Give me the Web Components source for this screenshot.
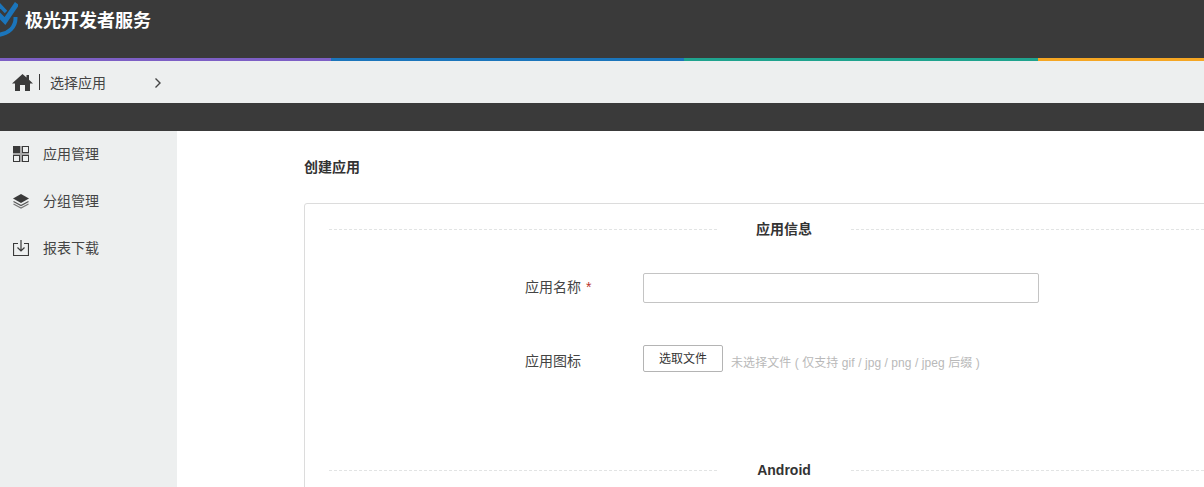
<!DOCTYPE html>
<html lang="zh">
<head>
<meta charset="utf-8">
<title>极光开发者服务</title>
<style>
  html, body { margin: 0; height: 100%; overflow: hidden; background: #fff; }
  body { font-family: "Liberation Sans", "Noto Sans CJK SC", sans-serif; font-size: 14px; color: #333; }
</style>
</head>
<body>
<app-header></app-header>
<app-breadcrumb>选择应用</app-breadcrumb>
<div style="height:28px;background:#3a3a3a"></div>
<div style="display:flex;height:356px">
  <app-sidebar>
    <side-item icon="grid">应用管理</side-item>
    <side-item icon="layers">分组管理</side-item>
    <side-item icon="download">报表下载</side-item>
  </app-sidebar>
  <app-main></app-main>
</div>

<script>
class AppHeader extends HTMLElement {
  constructor() {
    super();
    this.attachShadow({ mode: "open" });
    this.shadowRoot.innerHTML = `
      <style>
        :host { display: block; }
        .bar { height: 58px; background: #3a3a3a; display: flex; align-items: flex-start; }
        svg { flex: none; }
        h1 { margin: 9px 0 0 7px; font-size: 18px; line-height: 24px; font-weight: 700; color: #fff; }
        .strip { display: flex; height: 3px; }
        .strip i { display: block; }
      </style>
      <div class="bar">
        <svg width="18" height="38" viewBox="0 0 18 38" fill="none" stroke="#1b75bb">
          <path d="M-3 2.5 L6 12" stroke-width="3.5"/>
          <path d="M-3 13 L5 21 L17 3.5" stroke-width="5"/>
          <path d="M15.5 17 C16 27 9 34 -3 35" stroke-width="4"/>
        </svg>
        <h1>极光开发者服务</h1>
      </div>
      <div class="strip">
        <i style="width:331px;background:#7d5fc5"></i>
        <i style="width:353px;background:#1b75bb"></i>
        <i style="width:354px;background:#1fa38e"></i>
        <i style="flex:1;background:#f5a623"></i>
      </div>`;
  }
}

class AppBreadcrumb extends HTMLElement {
  constructor() {
    super();
    this.attachShadow({ mode: "open" });
    this.shadowRoot.innerHTML = `
      <style>
        :host { display: flex; align-items: center; height: 42px; background: #edefef; color: #444; }
        svg { flex: none; }
        .home { margin-left: 12px; }
        .sep { width: 1px; height: 16px; background: #3a3a3a; margin: 0 10px 0 6px; }
        .label { width: 104px; font-size: 14px; }
        .next { margin-top: 2px; }
      </style>
      <svg class="home" width="21" height="18" viewBox="0 0 21 18" fill="#3a3a3a">
        <path d="M10.5 1 L0 10.5 L3 10.5 L3 18 L8 18 L8 12 L13 12 L13 18 L18 18 L18 10.5 L21 10.5 L17 6.8 L17 2 L14.5 2 L14.5 4.5 Z"/>
      </svg>
      <span class="sep"></span>
      <span class="label"><slot></slot></span>
      <svg class="next" width="8" height="12" viewBox="0 0 8 12" fill="none" stroke="#444" stroke-width="1.4"><path d="M1.5 1.5 L6 6 L1.5 10.5"/></svg>`;
  }
}

class AppSidebar extends HTMLElement {
  constructor() {
    super();
    this.attachShadow({ mode: "open" });
    this.shadowRoot.innerHTML = `
      <style>
        :host { display: flex; flex-direction: column; flex: none; width: 177px; background: #edefef; }
      </style>
      <slot></slot>`;
  }
}

const sideIcons = {
  grid: `<rect x="6" y="6" width="4" height="4" fill="#9a9a9a"/>
         <rect x="0" y="7" width="16" height="2" fill="#a8a8a8"/>
         <rect x="7" y="0" width="2" height="16" fill="#a8a8a8"/>
         <rect x="0" y="0" width="7" height="7" fill="#3a3a3a"/>
         <rect x="9.5" y="0.5" width="6" height="6" fill="none" stroke="#3a3a3a"/>
         <rect x="0.5" y="9.5" width="6" height="6" fill="none" stroke="#3a3a3a"/>
         <rect x="9.5" y="9.5" width="6" height="6" fill="none" stroke="#3a3a3a"/>`,
  layers: `<path d="M8 1 L16 5.5 L8 10 L0 5.5 Z" fill="#3a3a3a"/>
           <path d="M0.5 8.5 L8 12.5 L15.5 8.5" fill="none" stroke="#555" stroke-width="1.2"/>
           <path d="M0.5 11 L8 15 L15.5 11" fill="none" stroke="#777" stroke-width="1.2"/>`,
  download: `<path d="M5 3.5 H0.5 V15.5 H15.5 V3.5 H11" fill="none" stroke="#3a3a3a" stroke-width="1.2"/>
             <path d="M8 0 V11 M4.5 7.5 L8 11 L11.5 7.5" fill="none" stroke="#3a3a3a" stroke-width="1.2"/>`
};

class SideItem extends HTMLElement {
  constructor() {
    super();
    this.attachShadow({ mode: "open" });
    this.shadowRoot.innerHTML = `
      <style>
        :host { display: flex; align-items: center; height: 47px; padding-left: 13px; gap: 14px; color: #444; font-size: 14px; }
        svg { flex: none; margin-bottom: 1px; }
        span { margin-bottom: 4px; }
      </style>
      <svg width="16" height="16" viewBox="0 0 16 16">${sideIcons[this.getAttribute("icon")]}</svg>
      <span><slot></slot></span>`;
  }
}

class FormSection extends HTMLElement {
  constructor() {
    super();
    this.attachShadow({ mode: "open" });
    this.shadowRoot.innerHTML = `
      <style>
        :host { display: flex; align-items: center; height: 20px; padding: 0 24px; }
        .line { flex: 1; border-top: 1px dashed #e2e4e4; }
        .title { width: 134px; text-align: center; font-size: 14px; line-height: 20px; font-weight: 700; color: #333; }
      </style>
      <span class="line"></span>
      <span class="title"><slot></slot></span>
      <span class="line"></span>`;
  }
}

class FormRow extends HTMLElement {
  constructor() {
    super();
    this.attachShadow({ mode: "open" });
    this.shadowRoot.innerHTML = `
      <style>
        :host { display: flex; align-items: flex-start; }
        .label { width: 338px; box-sizing: border-box; padding: var(--label-top, 4px) 0 0 220px; line-height: 20px; font-size: 14px; color: #444; flex: none; }
      </style>
      <div class="label"><slot name="label"></slot></div>
      <slot></slot>`;
  }
}

class AppMain extends HTMLElement {
  constructor() {
    super();
    this.attachShadow({ mode: "open" });
    this.shadowRoot.innerHTML = `
      <style>
        :host { display: block; flex: 1; min-width: 0; overflow: hidden; padding-left: 127px; background: #fff; }
        h2 { margin: 0; padding-top: 27px; height: 45px; line-height: 19px; font-size: 14px; font-weight: 700; color: #333; }
        .card { width: 960px; box-sizing: border-box; height: 320px; border: 1px solid #dcdcdc; border-radius: 3px; padding-top: 15px; }
        .name { margin-top: 34px; --label-top: 4px; }
        .icon { margin-top: 42px; --label-top: 6px; }
        .last { margin-top: 88px; }
        .star { color: #b8342c; margin-left: 1px; }
        input { display: block; width: 396px; height: 30px; box-sizing: border-box; border: 1px solid #c4c4c4; border-radius: 2px; margin: 0; padding: 0; background: #fff; }
        .file { display: flex; align-items: flex-start; }
        button { width: 80px; height: 27px; padding: 0 0 2px; box-sizing: border-box; border: 1px solid #b4b4b4; border-radius: 2px; background: #fff; font: inherit; font-size: 12px; color: #333; }
        .hint { margin: 9px 0 0 8px; font-size: 12px; line-height: 18px; color: #b9b9b9; letter-spacing: 0.07px; }
      </style>
      <h2>创建应用</h2>
      <div class="card">
        <form-section>应用信息</form-section>
        <form-row class="name">
          <span slot="label">应用名称 <span class="star">*</span></span>
          <input type="text">
        </form-row>
        <form-row class="icon">
          <span slot="label">应用图标</span>
          <div class="file">
            <button type="button">选取文件</button>
            <span class="hint">未选择文件 ( 仅支持 gif / jpg / png / jpeg 后缀 )</span>
          </div>
        </form-row>
        <form-section class="last">Android</form-section>
      </div>`;
  }
}

customElements.define("app-header", AppHeader);
customElements.define("app-breadcrumb", AppBreadcrumb);
customElements.define("app-sidebar", AppSidebar);
customElements.define("side-item", SideItem);
customElements.define("form-section", FormSection);
customElements.define("form-row", FormRow);
customElements.define("app-main", AppMain);
</script>
</body>
</html>
